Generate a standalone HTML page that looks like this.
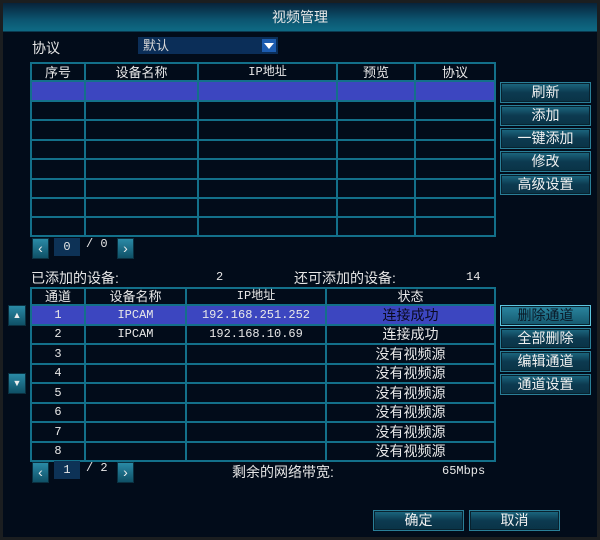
<!DOCTYPE html>
<html><head><meta charset="utf-8"><style>
*{margin:0;padding:0;box-sizing:border-box}
body{width:600px;height:540px;background:#1b1e20;overflow:hidden;font-family:"Liberation Sans","Noto Sans CJK SC",sans-serif;color:#e6e6e6;font-size:13px;position:relative}
.a{position:absolute}
#panel{left:3px;top:3px;width:594px;height:534px;background:#020c1a}
#title{left:3px;top:3px;width:594px;height:29px;background:linear-gradient(#07233a,#0c5570 60%,#0e6a84);border-bottom:1px solid #0a3a50;text-align:center;line-height:29px;font-size:14px;color:#e8e8e8}
.h{position:absolute;height:2px;background:#13708a}
.v{position:absolute;width:2px;background:#13708a}
.t{position:absolute;text-align:center;font-size:13px;line-height:19px;height:19px;white-space:nowrap;color:#e8e8e8}
.m{font-family:"Liberation Mono",monospace;font-size:12px}
.btn{position:absolute;width:91px;height:21px;background:linear-gradient(#1d6a82,#0c3a50 50%,#0a3346);border:1px solid #2a7f98;box-shadow:inset 0 0 0 1px #08222f;text-align:center;line-height:19px;font-size:14px;color:#f0f0f0}
.hl{border:1px solid #5cc6e0;color:#0a1a28;background:linear-gradient(#2a86a0,#15586e)}
.sb{position:absolute;width:17px;height:21px;background:linear-gradient(#2a8aa6,#0f5066);border:1px solid #0a3040;color:#eee;text-align:center;line-height:19px;font-size:14px}
.pg{position:absolute;width:26px;height:18px;background:#0d3256;text-align:center;line-height:18px;font-family:"Liberation Mono",monospace;font-size:12px}
</style></head><body>
<div id="panel" class="a"></div>
<div id="title" class="a">视频管理</div>

<div class="a" style="left:32px;top:38px;font-size:14px">协议</div>
<div class="a" style="left:138px;top:37px;width:140px;height:17px;background:#0b2e58;font-size:13px;line-height:17px;padding-left:5px;color:#d8d8d8">默认</div>
<div class="a" style="left:262px;top:39px;width:14px;height:13px;background:#1c5cb0"><div class="a" style="left:2px;top:4px;border-left:5px solid transparent;border-right:5px solid transparent;border-top:6px solid #fff"></div></div>

<!-- top table -->
<div class="a" style="left:30px;top:82px;width:466px;height:19px;background:#3c46c0"></div>
<div class="h" style="left:30px;top:62px;width:466px"></div>
<div class="h" style="left:30px;top:80px;width:466px"></div>
<div class="h" style="left:30px;top:100px;width:466px"></div>
<div class="h" style="left:30px;top:119px;width:466px"></div>
<div class="h" style="left:30px;top:139px;width:466px"></div>
<div class="h" style="left:30px;top:158px;width:466px"></div>
<div class="h" style="left:30px;top:178px;width:466px"></div>
<div class="h" style="left:30px;top:197px;width:466px"></div>
<div class="h" style="left:30px;top:216px;width:466px"></div>
<div class="h" style="left:30px;top:235px;width:466px"></div>
<div class="v" style="left:30px;top:62px;height:175px"></div>
<div class="v" style="left:84px;top:62px;height:175px"></div>
<div class="v" style="left:197px;top:62px;height:175px"></div>
<div class="v" style="left:336px;top:62px;height:175px"></div>
<div class="v" style="left:414px;top:62px;height:175px"></div>
<div class="v" style="left:494px;top:62px;height:175px"></div>
<div class="t" style="left:32px;top:63px;width:52px">序号</div>
<div class="t" style="left:86px;top:63px;width:111px">设备名称</div>
<div class="t m" style="left:199px;top:63px;width:137px">IP地址</div>
<div class="t" style="left:338px;top:63px;width:76px">预览</div>
<div class="t" style="left:416px;top:63px;width:78px">协议</div>

<div class="btn" style="left:500px;top:82px">刷新</div>
<div class="btn" style="left:500px;top:105px">添加</div>
<div class="btn" style="left:500px;top:128px">一键添加</div>
<div class="btn" style="left:500px;top:151px">修改</div>
<div class="btn" style="left:500px;top:174px">高级设置</div>

<div class="sb" style="left:32px;top:238px">&lsaquo;</div>
<div class="pg" style="left:54px;top:238px">0</div>
<div class="a m" style="left:86px;top:237px">/ 0</div>
<div class="sb" style="left:117px;top:238px">&rsaquo;</div>

<div class="a" style="left:31px;top:268px;font-size:14px">已添加的设备:</div>
<div class="a m" style="left:216px;top:270px">2</div>
<div class="a" style="left:294px;top:268px;font-size:14px">还可添加的设备:</div>
<div class="a m" style="left:466px;top:270px">14</div>

<!-- lower table -->
<div class="a" style="left:30px;top:306px;width:466px;height:19px;background:#3c46c0"></div>
<div class="h" style="left:30px;top:287px;width:466px"></div>
<div class="h" style="left:30px;top:304px;width:466px"></div>
<div class="h" style="left:30px;top:324px;width:466px"></div>
<div class="h" style="left:30px;top:343px;width:466px"></div>
<div class="h" style="left:30px;top:363px;width:466px"></div>
<div class="h" style="left:30px;top:382px;width:466px"></div>
<div class="h" style="left:30px;top:402px;width:466px"></div>
<div class="h" style="left:30px;top:421px;width:466px"></div>
<div class="h" style="left:30px;top:441px;width:466px"></div>
<div class="h" style="left:30px;top:460px;width:466px"></div>
<div class="v" style="left:30px;top:287px;height:175px"></div>
<div class="v" style="left:84px;top:287px;height:175px"></div>
<div class="v" style="left:185px;top:287px;height:175px"></div>
<div class="v" style="left:325px;top:287px;height:175px"></div>
<div class="v" style="left:494px;top:287px;height:175px"></div>
<div class="t" style="left:32px;top:287px;width:52px">通道</div>
<div class="t" style="left:86px;top:287px;width:99px">设备名称</div>
<div class="t m" style="left:187px;top:287px;width:138px">IP地址</div>
<div class="t" style="left:327px;top:287px;width:167px">状态</div>

<div class="t m" style="left:32px;top:306px;width:52px">1</div>
<div class="t m" style="left:86px;top:306px;width:99px">IPCAM</div>
<div class="t m" style="left:187px;top:306px;width:138px">192.168.251.252</div>
<div class="t" style="left:327px;top:306px;width:167px;color:#0a0a20;font-size:14px">连接成功</div>
<div class="t m" style="left:32px;top:325px;width:52px">2</div>
<div class="t m" style="left:86px;top:325px;width:99px">IPCAM</div>
<div class="t m" style="left:187px;top:325px;width:138px">192.168.10.69</div>
<div class="t" style="left:327px;top:325px;width:167px;font-size:14px">连接成功</div>
<div class="t m" style="left:32px;top:345px;width:52px">3</div>
<div class="t" style="left:327px;top:345px;width:167px;font-size:14px">没有视频源</div>
<div class="t m" style="left:32px;top:364px;width:52px">4</div>
<div class="t" style="left:327px;top:364px;width:167px;font-size:14px">没有视频源</div>
<div class="t m" style="left:32px;top:384px;width:52px">5</div>
<div class="t" style="left:327px;top:384px;width:167px;font-size:14px">没有视频源</div>
<div class="t m" style="left:32px;top:403px;width:52px">6</div>
<div class="t" style="left:327px;top:403px;width:167px;font-size:14px">没有视频源</div>
<div class="t m" style="left:32px;top:423px;width:52px">7</div>
<div class="t" style="left:327px;top:423px;width:167px;font-size:14px">没有视频源</div>
<div class="t m" style="left:32px;top:442px;width:52px">8</div>
<div class="t" style="left:327px;top:442px;width:167px;font-size:14px">没有视频源</div>

<div class="sb" style="left:8px;top:305px;width:18px;font-size:9px">&#9650;</div>
<div class="sb" style="left:8px;top:373px;width:18px;font-size:9px">&#9660;</div>

<div class="btn hl" style="left:500px;top:305px">删除通道</div>
<div class="btn" style="left:500px;top:328px">全部删除</div>
<div class="btn" style="left:500px;top:351px">编辑通道</div>
<div class="btn" style="left:500px;top:374px">通道设置</div>

<div class="sb" style="left:32px;top:462px">&lsaquo;</div>
<div class="pg" style="left:54px;top:461px">1</div>
<div class="a m" style="left:86px;top:461px">/ 2</div>
<div class="sb" style="left:117px;top:462px">&rsaquo;</div>
<div class="a" style="left:232px;top:462px;font-size:14px">剩余的网络带宽:</div>
<div class="a m" style="left:442px;top:464px">65Mbps</div>

<div class="btn" style="left:373px;top:510px">确定</div>
<div class="btn" style="left:469px;top:510px">取消</div>
</body></html>
